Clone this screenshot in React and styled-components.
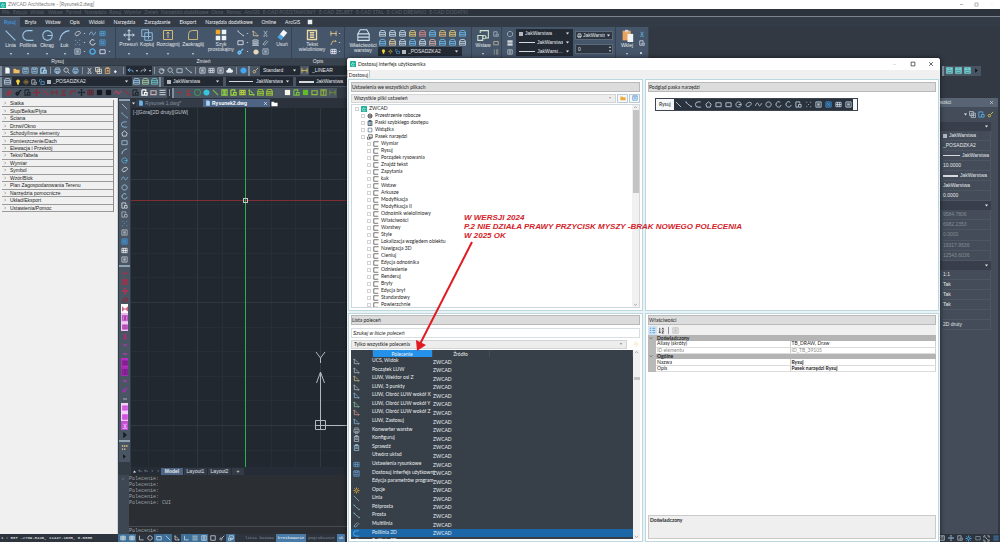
import React from "react";
import styled, { createGlobalStyle, css } from "styled-components";

const Global = createGlobalStyle`
  *, *::before, *::after { box-sizing: border-box; }
  html, body { margin: 0; background: #323942; }
  body { font: 5px/7px "Liberation Sans", Arial, sans-serif; color: #e3e7eb; overflow: hidden; }
  button, input, select { font: inherit; color: inherit; margin: 0; padding: 0; border: 0; background: none; border-radius: 0; }
  table { border-collapse: collapse; border-spacing: 0; }
`;

/* ---------- icons ---------- */
const PATHS = {
  line: "M2 2 14 14",
  ray: "M2 3 14 13M1 2h2v2M13 12h2v2",
  pline: "M13 2H7a5 5 0 0 0 0 12h7",
  circle: "M8 2a6 6 0 1 0 .1 0z",
  circleR: "M8 2a6 6 0 1 0 .1 0zM8 8h6",
  arc: "M2 14C3 7 7 3 14 2",
  rect: "M2 4h12v9H2z",
  polygon: "M8 2l6 5-2 7H4L2 7z",
  spline: "M1 11c3-9 6-7 7-3s4 5 7-3",
  ellipse: "M3 11C1 7 7 3 11 3s5 4 1 7-7 5-9 1z",
  arcs: "M12 3a6 6 0 1 0 2 6",
  block: "M2 2h9v4M2 2v12h5M8 8h6v6H8z",
  points: "M3 3h2M12 3h2M7 8h2M3 13h2M12 13h2",
  hatch: "M2 2h12v12H2zM5 5h6v6H5zM5 5l6 6",
  grid: "M2 3h12v10H2zM2 8h12M6 3v10M10 3v10",
  text: "M2 2h12v12H2zM5 5h6M5 8h6M5 11h6",
  move: "M8 1v14M1 8h14M6 3l2-2 2 2M6 13l2 2 2-2M3 6 1 8l2 2M13 6l2 2-2 2",
  copy: "M1 1h9v9H1zM5 5h10v10H5zM10 7v6M7 10h6",
  stretch: "M2 2h12v12H2zM8 12V4M6 6l2-2 2 2",
  fillet: "M2 14V7a5 5 0 0 1 5-5h7v12z",
  layers: "M3 2h10l2 3H1zM3 7h10l2 3H1zM3 12h10l2 3H1z",
  stack: "M4 1h8l3 5H1zM1 6v4h14V6M1 10v4h14v-4",
  insert: "M1 8h6v6H1zM4 5V2h10v9h-4M9 8a2 2 0 1 0 .1 0",
  dim: "M2 2v12M14 2v12M2 8h12M4 6 2 8l2 2M12 6l2 2-2 2",
  leader: "M2 14 6 5h8M12 3l2 2-2 2",
  file: "M3 1h7l3 3v11H3z",
  folder: "M1 4h5l2 2h7v8H1z",
  save: "M2 2h12v12H2zM5 2v4h6V2M4 10h8",
  print: "M4 6V2h8v4M2 6h12v6H2zM5 10h6v5H5z",
  cut: "M4 2l7 9M12 2 5 11M3 13a2 2 0 1 0 4-1M9 12a2 2 0 1 0 4 1",
  paste: "M3 3h10v12H3zM6 1h4v3H6zM6 8h5M6 11h5",
  brush: "M14 2 8 8M5 7l4 4-4 3-3-3z",
  undo: "M7 3 2 7l5 4M2 7h8q4 0 4 5",
  redo: "M9 3l5 4-5 4M14 7H6q-4 0-4 5",
  hand: "M4 8V4M7 8V2M10 8V3M13 9V5v6q-1 4-5 4-4 0-6-6",
  zoom: "M7 2a5 5 0 1 0 .1 0zM11 11l4 4",
  help: "M8 1a7 7 0 1 0 .1 0z",
  cloud: "M3 13a3 3 0 0 1 1-6 4 4 0 0 1 8-1 3 3 0 0 1 1 7z",
  bulb: "M8 1a5 5 0 0 0-3 9l1 5h4l1-5A5 5 0 0 0 8 1z",
  sun: "M8 5a3 3 0 1 0 .1 0zM8 1v2M8 13v2M1 8h2M13 8h2M3 3l1 1M12 12l1 1M13 3l-1 1M4 12l-1 1",
  lock: "M1 8V4a3 3 0 0 1 6 0M5 7h9v8H5z",
  ucs: "M3 2v11h11M1 4l2-2 2 2M12 11l2 2-2 2M6 5l5 5",
  clip: "M3 3h10v12H3zM6 1h4v3H6zM5 7h6M5 10h6",
  gear: "M8 5a3 3 0 1 0 .1 0zM8 1v4M8 11v4M1 8h4M11 8h4M3 3l2 2M11 11l2 2M13 3l-2 2M5 11l-2 2",
  multi: "M2 12 10 3M6 14l8-9M2 12l4 2",
  caret: "M3 5h10l-5 6z",
  right: "M5 3v10l6-5z",
  chevR: "M6 3l5 5-5 5",
  down: "M3 6l5 5 5-5",
  up: "M3 10l5-5 5 5",
  upF: "M3 11h10L8 5z",
  x: "M3 3l10 10M13 3 3 13",
  min: "M3 8h10",
  max: "M3 3h10v10H3z",
  ortho: "M4 2v11h11",
  full: "M2 6V2h4M10 2h4v4M14 10v4h-4M6 14H2v-4M5 5l6 6",
  menu: "M1 3h14M1 8h14M1 13h14",
  square: "M2 2h12v12H2z",
  az: "M4 2v11M2 11l2 3 2-3M9 6l2-4 2 4M9 9h4l-4 5h4",
  tree: "M2 3h3M8 3h6M2 8h3M8 8h6M2 13h3M8 13h6",
  toolbar: "M15 2H2v12h12",
  dots: "M2 3h3v3H2zM7 3h3v3H7zM12 3h3v3h-3zM2 10h3v3H2zM7 10h3v3H7z",
};
const Svg = styled.svg`
  flex: none;
  display: block;
  width: ${(p) => p.$s}px;
  height: ${(p) => p.$s}px;
  color: ${(p) => p.$c || "currentColor"};
`;
const Icon = ({ n, s = 7, c, f, w = 1.8 }) => (
  <Svg viewBox="0 0 16 16" $s={s} $c={c} aria-hidden="true">
    <path d={PATHS[n]} fill={f ? "currentColor" : "none"} stroke={f ? "none" : "currentColor"} strokeWidth={w} />
  </Svg>
);
const Logo = ({ s = 7 }) => (
  <Svg viewBox="0 0 16 16" $s={s} aria-hidden="true">
    <rect width="16" height="16" rx="1" fill="#1fae9b" />
    <path d="M3 11l4-7 2 5 4-4M4 13h8" fill="none" stroke="#d9fff7" strokeWidth="1.6" />
  </Svg>
);

/* ---------- shared ---------- */
const lato = css`
  font-family: Lato, "Liberation Sans", sans-serif;
`;
const Row = styled.div`
  display: flex;
  align-items: center;
  gap: ${(p) => p.$gap || 0}px;
`;
const Grow = styled.div`
  flex: 1;
  min-width: 0;
`;
const Slot = styled.button`
  flex: none;
  display: flex;
  align-items: center;
  justify-content: center;
  width: ${(p) => p.$w || 9}px;
  height: 9px;
  background: ${(p) => p.$bg || "none"};
`;
const Tool = ({ label, width, bg, ...icon }) => (
  <Slot aria-label={label || icon.n} $w={width} $bg={bg}>
    <Icon {...icon} />
  </Slot>
);
const ComboBox = styled.div`
  flex: none;
  display: flex;
  align-items: center;
  gap: 2px;
  width: ${(p) => p.$w}px;
  height: 9px;
  padding: 0 3px;
  background: #232a34;
  ${(p) => p.$frame && css`padding: 0 1px; gap: 1px; border: 1px solid #5c6979; background: #2e3641;`}
  select {
    appearance: none;
    flex: 1;
    min-width: 0;
    text-align-last: ${(p) => (p.$right ? "right" : "left")};
  }
`;
const Stroke = styled.i`
  flex: none;
  width: ${(p) => p.$w}px;
  height: ${(p) => p.$t || 1}px;
  background: #d6dade;
`;
const Swatch = styled.i`
  flex: none;
  width: 4px;
  height: 4px;
  background: #b4b9bf;
`;
const Combo = ({ label, value, children, ...p }) => (
  <ComboBox {...p}>
    {children}
    <select aria-label={label} defaultValue={value}>
      <option>{value}</option>
    </select>
    <Icon n="caret" s={5} f />
  </ComboBox>
);

/* ---------- frame ---------- */
const Page = styled.div`
  position: relative;
  display: flex;
  flex-direction: column;
  height: 100vh;
  overflow: hidden;
`;
const TitleBar = styled.header`
  ${lato}
  display: flex;
  align-items: center;
  gap: 2px;
  height: 9px;
  padding-right: 6px;
  background: #fff;
  color: #7b7b7b;
`;
const MenuBar = styled.nav`
  ${lato}
  display: flex;
  align-items: center;
  gap: 3px;
  height: 8px;
  padding-left: 2px;
  background: #2c333c;
  border-bottom: 1px solid #7d858e;
  color: #59616b;
`;
const Tabs = styled.nav`
  ${lato}
  display: flex;
  align-items: center;
  gap: 1px;
  height: 10px;
  background: #333b46;
`;
const Tab = styled.button`
  height: 10px;
  padding: 0 4px;
  color: ${(p) => (p.$on ? "#3fa3ee" : "#eef1f4")};
  background: ${(p) => (p.$on ? "#47576b" : "none")};
`;
const Ribbon = styled.div`
  display: flex;
  height: 38px;
`;
const Group = styled.section`
  flex: none;
  display: flex;
  flex-direction: column;
  width: ${(p) => p.$w}px;
  border-right: 1px solid #39434f;
  background: #46566a;
`;
const GroupBody = styled.div`
  flex: 1;
  display: flex;
  align-items: center;
  gap: ${(p) => p.$gap || 0}px;
  padding: 0 3px;
`;
const GroupName = styled.div`
  height: 7px;
  text-align: center;
  background: #39424f;
`;
const BigButton = styled.button`
  flex: none;
  display: flex;
  flex-direction: column;
  align-items: center;
  width: ${(p) => p.$w}px;
  height: 27px;
  line-height: 5px;
  white-space: nowrap;
`;
const BigLabel = styled.span`
  flex: 1;
  padding-top: 1px;
`;
const Big = ({ label, w, caret = true, children }) => (
  <BigButton $w={w}>
    {children}
    <BigLabel>{label}</BigLabel>
    {caret && <Icon n="caret" s={4} f />}
  </BigButton>
);
const MiniGrid = styled.div`
  flex: none;
  display: grid;
  align-items: center;
  grid-template-columns: ${(p) => p.$cols || "9px"};
`;
const MiniTools = ({ tools, carets }) => (
  <MiniGrid $cols="10px 5px 10px 10px 4px">
    {tools.map((row, r) => (
      <React.Fragment key={r}>
        <Tool {...row[0]} />
        <Icon n="caret" s={3} f />
        <Tool {...row[1]} />
        <Tool {...row[2]} />
        <span>{carets === r && <Icon n="caret" s={3} f />}</span>
      </React.Fragment>
    ))}
  </MiniGrid>
);

const MENU = ["Plik", "Edycja", "Widok", "Wstaw", "Format", "Narzędzia", "Rysuj", "Wymiar", "Zmień", "Narzędzia dodatkowe", "Okno", "Pomoc", "ArcGIS", "E-CAD PODSTAWOWY", "E-CAD ŻELBET", "E-CAD STAL", "E-CAD DREWNO", "E-CAD DODATKI"];
const RIBBON_TABS = ["Rysuj", "Bryła", "Wstaw", "Opis", "Widoki", "Narzędzia", "Zarządzanie", "Eksport", "Narzędzia dodatkowe", "Online", "ArcGIS"];
const LB = "#9cc9e6";
const DRAW_TOOLS = [
  [{ n: "ellipse", c: "#d5dde6" }, { n: "spline", c: LB }, { n: "grid", c: "#4f9fd8" }],
  [{ n: "points", c: LB }, { n: "arcs", c: "#fff" }, { n: "hatch", c: "#4f9fd8" }],
  [{ n: "text", c: "#c6d2de" }, { n: "circle", c: "#4fb2f0", w: 3 }, { n: "rect", c: "#eef" }],
];
const EDIT_TOOLS = [
  [{ n: "ray", c: "#d5dde6" }, { n: "ucs", c: "#e4c9a0" }, { n: "cut", c: "#b9c6d2" }],
  [{ n: "rect", c: "#eef" }, { n: "layers", c: "#c8d2dc" }, { n: "multi", c: "#b9c6d2" }],
  [{ n: "brush", c: "#6fc2f5", w: 3 }, { n: "help", c: "#e7d9c0", f: true, s: 6 }, { n: "text", c: "#b9c6d2" }],
];

const ArrayIcon = () => (
  <Svg viewBox="0 0 16 16" $s={12} aria-hidden="true">
    <path d="M1 1h6v6H1z" fill="#f5a623" />
    <path d="M9 1h6v6H9zM1 9h6v6H1zM9 9h6v6H9z" fill="#eef3f8" />
  </Svg>
);
const EraserIcon = () => (
  <Svg viewBox="0 0 16 16" $s={12} aria-hidden="true">
    <path d="M10 1l5 4-5 6-5-4z" fill="#f4f7fa" />
    <path d="M5 7l5 4-3 4-5-4z" fill="#4aa8e8" />
  </Svg>
);
const PasteIcon = () => (
  <Svg viewBox="0 0 16 16" $s={13} aria-hidden="true">
    <path d="M2 2h10v12H2z" fill="#e9a35c" />
    <path d="M5 1h4v3H5z" fill="#cfd6dd" />
    <path d="M8 6h7v10H8z" fill="#f2f5f8" />
  </Svg>
);
const StackBox = styled.div`
  display: flex;
  flex-direction: column;
  gap: 4px;
`;
const Spinner = styled.div`
  display: flex;
  align-items: center;
  width: 38px;
  height: 10px;
  padding-left: 2px;
  border: 1px solid #5c6979;
  background: #2e3641;
  input { flex: 1; min-width: 0; }
`;

const RibbonBar = () => (
  <Ribbon>
    <Group $w={116}>
      <GroupBody>
        <Big label="Linia" w={15}><Icon n="line" s={13} c={LB} w={1.3} /></Big>
        <Big label="Polilinia" w={20}><Icon n="pline" s={13} c={LB} w={1.3} /></Big>
        <Big label="Okrąg" w={18}><Icon n="circleR" s={13} c={LB} w={1.3} /></Big>
        <Big label="Łuk" w={17}><Icon n="arc" s={13} c={LB} w={1.3} /></Big>
        <MiniTools tools={DRAW_TOOLS} carets={2} />
      </GroupBody>
      <GroupName>Rysuj</GroupName>
    </Group>
    <Group $w={176}>
      <GroupBody>
        <Big label="Przesuń" w={19}><Icon n="move" s={12} c="#cfe2f2" w={1.3} /></Big>
        <Big label="Kopiuj" w={18}><Icon n="copy" s={12} c="#8fbbe0" w={1.3} /></Big>
        <Big label="Rozciągnij" w={24}><Icon n="stretch" s={12} c="#d6bc7a" w={1.3} /></Big>
        <Big label="Zaokrąglij" w={26}><Icon n="fillet" s={12} c="#c9b679" w={1.3} /></Big>
        <Big label={<>Szyk<br />prostokątny</>} w={30} caret={false}><ArrayIcon /></Big>
        <MiniTools tools={EDIT_TOOLS} />
        <Big label="Usuń" w={14} caret={false}><EraserIcon /></Big>
      </GroupBody>
      <GroupName>Zmień</GroupName>
    </Group>
    <Group $w={53}>
      <GroupBody>
        <Big label={<>Tekst<br />wieloliniowy</>} w={34} caret={false}><Icon n="text" s={12} c="#ecd9a6" /></Big>
        <MiniGrid $cols="9px 4px">
          <Tool n="dim" c="#e6c98a" /><Icon n="caret" s={3} f />
          <Tool n="leader" c="#e6c98a" /><Icon n="caret" s={3} f />
          <Tool n="grid" c="#eef" /><Icon n="caret" s={3} f />
        </MiniGrid>
      </GroupBody>
      <GroupName>Opis</GroupName>
    </Group>
    <Group $w={127}>
      <GroupBody>
        <Big label={<>Właściwości<br />warstwy</>} w={30} caret={false}><Icon n="stack" s={13} c="#cfe0ee" w={1.3} /></Big>
        <div>
          <MiniGrid $cols="repeat(9, 10px)">
            {["#cfe0ee", "#cfe0ee", "#cfe0ee", "#f0d070", "#e58a8a", "#6fc2f5", "#f0c070", "#f0d070", "#6fc2f5", "#6fc2f5", "#f0d8a8", "#cfe0ee", "#6fc2f5", "#cfe0ee", "#e5b5a8", "#6fc2f5", "#6fc2f5", "#cfe0ee"].map((c, i) => (
              <Tool key={i} n="stack" label={`Warstwa ${i + 1}`} c={c} s={7} />
            ))}
          </MiniGrid>
          <Combo label="Warstwa bieżąca" value="_POSADZKA2" $w={84}>
            <Icon n="bulb" s={5} c="#f5d33c" f /><Icon n="sun" s={5} c="#f5c33c" /><Icon n="lock" s={5} c="#5db8f5" /><Swatch />
          </Combo>
        </div>
      </GroupBody>
      <GroupName />
    </Group>
    <Group $w={30}>
      <GroupBody>
        <Big label="Wstaw" w={16}><Icon n="insert" s={13} c="#cfe0c8" w={1.3} /></Big>
        <MiniGrid><Tool n="block" c="#b9c6d2" s={6} /><Tool n="rect" c="#d8c8a8" s={6} /><Tool n="tree" c="#d8d2a8" s={6} /></MiniGrid>
      </GroupBody>
      <GroupName />
    </Group>
    <Group $w={114}>
      <GroupBody $gap={2}>
        <MiniGrid><Tool n="help" c="#b9c6d2" s={6} /><Tool n="menu" c="#fff" s={6} w={3} /><Tool n="text" c="#c9d2da" s={6} /></MiniGrid>
        <div>
          <Combo label="Kolor" value="JakWarstwa" $w={57}><Swatch /></Combo>
          <Combo label="Szerokość linii" value="JakWarstwa" $w={57} $right><Stroke $w={16} /></Combo>
          <Combo label="Rodzaj linii" value="JakWarst…" $w={57} $right><Stroke $w={16} /></Combo>
        </div>
        <StackBox>
          <Combo label="Styl wydruku" value="JakWarsts" $w={38} $frame><Icon n="print" s={5} /></Combo>
          <Spinner><input aria-label="Przezroczystość" defaultValue="0" /><span><Icon n="upF" s={4} f /><Icon n="caret" s={4} f /></span></Spinner>
        </StackBox>
      </GroupBody>
      <GroupName />
    </Group>
    <Group $w={33}>
      <GroupBody $gap={2}>
        <Big label="Wklej" w={16}><PasteIcon /></Big>
        <MiniGrid><Tool n="cut" c="#6fc2f5" s={6} /><Tool n="block" c="#eef" s={6} /><Tool n="brush" c="#eef" s={6} f /></MiniGrid>
      </GroupBody>
      <GroupName />
    </Group>
  </Ribbon>
);

/* ---------- toolbars ---------- */
const ToolRow = styled.div`
  display: flex;
  align-items: center;
  height: 11px;
`;
const Bar = styled.div`
  flex: none;
  display: flex;
  align-items: center;
  gap: ${(p) => p.$gap || 0}px;
  height: 10px;
  padding-left: ${(p) => (p.$pad ? 3 : 1)}px;
  border-left: 2px solid #7f8fa0;
  background: #4a5564;
`;
const EndBar = styled(Bar)`
  margin-right: 19px;
`;
const Sep = styled.i`
  flex: none;
  width: 1px;
  height: 7px;
  margin: 0 2px;
  background: #8591a0;
`;
const Dark = styled.div`
  display: flex;
  align-items: center;
  height: 9px;
  background: #232a34;
`;
const RED_BAR = ["#b02c35", "#14181d", "#20262e", "#8b2a35", "#a83240", "#7b3038", "#7a2f3c", "#8b2a35", "#1e242c", "#5e2b34", "#15191f", "#15191f", "#b0475a", "#8c2f3a", "#20262e", "#ffffff", "#c9adb2", "#b8bfc7"];
const RED_SHAPES = ["multi", "brush", "block", "move", "line", "dim", "cut", "leader", "move", "grid", "square", "square", "spline", "ray", "block", "block", "rect", "menu"];
const GREEN_SHAPES = ["min", "cut", "help", "help", "line", "text", "block", "grid", "ucs", "stack", "stack", "menu", "square", "block", "square", "rect", "stretch", "dim"];
const GREEN_BAR = ["#a02c35", "#9b3b3b", "#3f8f52", "#38c5dc", "#7cc142", "#8fd044", "#9bd83c", "#b1c93e", "#8dc63f", "#86b63a", "#92b53a", "#4b5c66", "#f3f6e8", "#7bbf45", "#5fbe2a", "#8cbf3c", "#8fae3c", "#69803a"];

const ToolBars = () => (
  <>
    <ToolRow>
      <Bar>
        <Tool n="file" c="#f2f5f8" f /><Tool n="folder" c="#f0bd62" f /><Tool n="save" c="#9ed0f0" /><Tool n="save" c="#9ed0f0" /><Tool n="block" c="#9ed0f0" w={3} />
        <Sep /><Tool n="print" c="#a9cdea" /><Tool n="zoom" c="#d3dbe3" /><Tool n="print" c="#8fc0ea" />
        <Sep /><Tool n="cut" c="#e3e8ed" /><Tool n="copy" c="#e6e0cf" /><Tool n="paste" c="#eab067" /><Tool n="brush" c="#eef" f />
        <Sep />
        <Dark><Tool n="undo" c="#7fbdf0" /><Icon n="caret" s={4} f /><Tool n="redo" c="#a9b3be" /><Icon n="caret" s={4} f /></Dark>
        <Sep /><Tool n="hand" c="#d6dde4" /><Tool n="zoom" c="#c3ccd5" /><Tool n="rect" c="#c3ccd5" /><Tool n="ray" c="#c3ccd5" />
        <Sep /><Tool n="text" c="#d6dde4" /><Tool n="grid" c="#d6dde4" /><Tool n="text" c="#d6dde4" /><Tool n="cloud" c="#e9eef3" f />
        <Sep /><Tool n="help" c="#43a6f0" f />
      </Bar>
      <Bar>
        <Tool n="brush" c="#e6c98a" />
        <Combo label="Styl tekstu" value="Standard" $w={40} />
        <Tool n="dim" c="#d9c25a" />
        <Combo label="Styl wymiarowania" value="_LINEAR" $w={60} />
      </Bar>
      <Grow />
      <EndBar>
        <Tool n="save" c="#6fd0d0" w={3} /><Tool n="save" c="#6fd0d0" w={3} /><Tool n="save" c="#6fd0d0" w={3} /><Tool n="right" c="#10151b" f />
      </EndBar>
    </ToolRow>
    <ToolRow>
      <Bar>
        <Tool n="stack" c="#bfd3e4" />
        <Combo label="Warstwa" value="_POSADZKA2" $w={120}>
          <Icon n="bulb" s={6} c="#f5d33c" f /><Icon n="sun" s={6} c="#f5c33c" /><Icon n="block" s={6} c="#d6dde4" /><Icon n="lock" s={6} c="#5db8f5" /><Swatch />
        </Combo>
        <Tool n="stack" c="#9ed0f0" /><Tool n="stack" c="#a8d8a8" /><Tool n="stack" c="#6fd0d0" />
      </Bar>
      <Bar $pad $gap={3}>
        <Combo label="Kolor obiektu" value="JakWarstwa" $w={59}><Swatch /></Combo>
        <Combo label="Rodzaj linii obiektu" value="JakWarstwa" $w={67} $right><Stroke $w={24} /></Combo>
        <Combo label="Grubość linii obiektu" value="JakWarstwa" $w={60}><Stroke $w={15} $t={2} /></Combo>
      </Bar>
    </ToolRow>
    <ToolRow>
      <Bar $pad>{RED_BAR.map((c, i) => <Tool key={i} n={RED_SHAPES[i]} c={c} w={2.6} f={i === 10 || i === 11} label={`Kreskuj ${i + 1}`} />)}</Bar>
      <Sep />
      <Bar>{GREEN_BAR.map((c, i) => <Tool key={i} n={GREEN_SHAPES[i]} c={c} w={2.6} f={i === 3 || i === 12 || i === 14} label={`Teren ${i + 1}`} />)}</Bar>
    </ToolRow>
  </>
);

/* ---------- left palette ---------- */
const Middle = styled.div`
  flex: 1;
  min-height: 0;
  display: flex;
`;
const Palette = styled.aside`
  flex: none;
  width: 118px;
  padding: 2px 3px 0 2px;
  background: #f0f0f0;
  border-right: 1px solid #cfd4d9;
  color: #1c1c1c;
`;
const PaletteList = styled.div`
  display: grid;
  grid-auto-rows: 1fr;
  height: 112px;
`;
const PaletteItem = styled.button`
  display: flex;
  align-items: center;
  gap: 3px;
  padding-left: 1px;
  line-height: 6px;
  border-right: 1px solid #8b8b8b;
  border-bottom: 1px solid #9a9a9a;
`;
const PALETTE = ["Siatka", "Słup/Belka/Płyta", "Ściana", "Drzwi/Okno", "Schody/Inne elementy", "Pomieszczenie/Dach", "Elewacja i Przekrój", "Tekst/Tabela", "Wymiar", "Symbol", "Wzór/Blok", "Plan Zagospodarowania Terenu", "Narzędzia pomocnicze", "Układ/Eksport", "Ustawienia/Pomoc"];

/* ---------- centre ---------- */
const Centre = styled.main`
  flex: 1;
  min-width: 0;
  display: flex;
  flex-direction: column;
`;
const Work = styled.div`
  flex: 1;
  min-height: 0;
  display: flex;
`;
const SideBar = styled.div`
  flex: none;
  width: 13px;
  padding: 1px 0 0 1px;
  background: #333b45;
`;
const SideTools = styled.div`
  display: flex;
  flex-direction: column;
  align-items: center;
  width: 11px;
  border-top: 2px solid #8fa3b5;
  padding: 1px 0;
  background: #4a5564;
`;
const View = styled.div`
  flex: 1;
  min-width: 0;
  display: flex;
  flex-direction: column;
`;
const DocTabs = styled.div`
  display: flex;
  align-items: center;
  height: 10px;
  background: #2b323c;
`;
const DocTab = styled.button`
  display: flex;
  align-items: center;
  gap: 1px;
  width: 67px;
  height: 8px;
  padding: 0 2px;
  text-align: left;
  color: ${(p) => (p.$on ? "#fff" : "#8992a0")};
  font-weight: ${(p) => (p.$on ? 700 : 400)};
  background: ${(p) => (p.$on ? "#4d6484" : "#343c48")};
  span { flex: 1; }
`;
const Canvas = styled.div`
  position: relative;
  flex: 1;
  min-height: 0;
  background: #212830;
  > svg { display: block; width: 100%; height: 100%; }
`;
const ViewLabel = styled.div`
  position: absolute;
  left: 2px;
  top: 1px;
  color: #c9ced4;
`;
const LayoutTabs = styled.div`
  display: flex;
  align-items: center;
  height: 8px;
  background: #262c35;
`;
const LayoutTab = styled.button`
  width: ${(p) => p.$w}px;
  height: 7px;
  background: ${(p) => (p.$on ? "#4d6484" : "#333b46")};
  font-weight: ${(p) => (p.$on ? 700 : 400)};
  border-right: 1px solid #262c35;
`;
const Command = styled.div`
  display: flex;
  height: 59px;
  background: #2b2e32;
  color: #9ea4aa;
  font: 5px/6px "Liberation Mono", monospace;
`;
const CommandGrip = styled.div`
  width: 11px;
  padding: 2px 3px;
  background: #3d4653;
`;
const CommandText = styled.div`
  flex: 1;
  display: flex;
  flex-direction: column;
  padding-top: 1px;
  pre { flex: 1; margin: 0; font: inherit; }
`;
const CommandLine = styled.label`
  display: flex;
  height: 8px;
  padding-top: 1px;
  border-top: 1px solid #474c52;
  input { flex: 1; height: 6px; }
`;

const SIDE_A = [["line", "#a5c5de"], ["ray", "#7fb0d0"], ["pline", "#8fc5ea"], ["polygon", "#dce3ea"], ["rect", "#a5c5de"], ["arc", "#a5d5ea"], ["circleR", "#5db8e8"], ["ellipse", "#e6e9ec"], ["spline", "#7fc0e8"], ["circle", "#9fd5f0"], ["arcs", "#9fd5f0"], ["block", "#e1e5e9"], ["block", "#b5bcc4"], ["points", "#4fa5f0"], ["text", "#b9c0c8"], ["hatch", "#3f9be8"], ["grid", "#eef1f4"], ["text", "#c5ccd3"]];
const SIDE_B = [["down", "#b02c45"], ["stretch", "#b02c45"], ["move", "#c03050"], ["ellipse", "#8b2a3a"], ["dim", "#c04060", "#fff"], ["text", "#b040b0", "#e8b8ec"], ["grid", "#b040b0", "#f0c8f4"], ["cut", "#b02c75"], ["min", "#c030c0"], ["min", "#d030d0"], ["grid", "#7a2088", "#b52bc4"], ["text", "#7a2088", "#a52bb4"], ["min", "#d030d0"], ["brush", "#a030b0"], ["min", "#aab"], ["grid", "#d050e0", "#f4d0f8"], ["hatch", "#d050e0", "#f4d0f8"], ["cut", "#f0a0f8", "#c050d0"], ["right", "#10151b"]];

const gridX = [66, 189];
const gridY = [71, 194, 317];
const Drawing = () => (
  <svg aria-label="Obszar rysunku">
    <g stroke="#262f38">
      {[17, 42, 91, 140, 164, 213].map((x) => <line key={x} x1={x + 0.5} x2={x + 0.5} y1="0" y2="100%" />)}
      {[22, 46, 96, 120, 145, 169, 219, 243, 268, 292, 342].map((y) => <line key={y} y1={y + 0.5} y2={y + 0.5} x1="0" x2="100%" />)}
    </g>
    <g stroke="#2f3841">
      {gridX.map((x) => <line key={x} x1={x + 0.5} x2={x + 0.5} y1="0" y2="100%" />)}
      {gridY.map((y) => <line key={y} y1={y + 0.5} y2={y + 0.5} x1="0" x2="100%" />)}
    </g>
    <line x1="0" x2="100%" y1="92.5" y2="92.5" stroke="#7f2f33" />
    <line x1="114.5" x2="114.5" y1="0" y2="100%" stroke="#2bb04a" />
    <rect x="112.5" y="90.5" width="4" height="4" fill="none" stroke="#c3c8cc" />
    <g stroke="#b4b9be" fill="none">
      <path d="M189.5 322V265M185.5 275l4-11 4 11M184.5 312.5h10v9h-10zM184.5 317.5H240" />
      <path d="M185 244l4.5 6 4.5-6M189.5 250v5" />
    </g>
  </svg>
);

/* ---------- right palette ---------- */
const Props = styled.aside`
  flex: none;
  width: 88px;
  border-right: 2px solid #323942;
  background: #434c58;
`;
const PropsTitle = styled.div`
  display: flex;
  align-items: center;
  justify-content: space-between;
  height: 9px;
  padding: 0 4px 0 12px;
  background: #586473;
`;
const PropsTools = styled(Row)`
  justify-content: flex-end;
  height: 15px;
  padding-right: 3px;
`;
const PropsHead = styled.div`
  display: flex;
  align-items: center;
  justify-content: flex-end;
  height: 9px;
  margin-right: 7px;
  padding-right: 2px;
  background: #383f4a;
`;
const PropsGroup = styled.div`
  display: grid;
  grid-auto-rows: 1fr;
  height: ${(p) => p.$h}px;
  margin-right: 7px;
  padding-left: 31px;
  color: ${(p) => (p.$dim ? "#848c96" : "#e3e7eb")};
  border-right: 1px solid #4d5764;
`;
const PropsRow = styled.div`
  display: flex;
  align-items: center;
  gap: 2px;
  border-bottom: 1px solid #4d5764;
`;

/* ---------- status bar ---------- */
const Status = styled.footer`
  display: flex;
  align-items: center;
  height: 8px;
  overflow: hidden;
  background: #2d343e;
  font: 4px/6px "Liberation Mono", monospace;
`;
const Coords = styled.div`
  width: 118px;
  padding-left: 1px;
  color: #fff;
`;
const Toggle = styled.button`
  height: 8px;
  padding: 0 2px;
  color: ${(p) => (p.$on ? "#fff" : "#828a94")};
  background: ${(p) => (p.$on ? "#4a7ba8" : "none")};
`;
const StatusGap = styled.div`
  width: 8px;
`;

/* ---------- dialog ---------- */
const Dialog = styled.section`
  ${lato}
  position: absolute;
  left: 347px;
  right: 60px;
  top: 58px;
  bottom: 0;
  display: flex;
  flex-direction: column;
  border-radius: 3px 3px 0 0;
  background: #e9f3f5;
  box-shadow: 0 0 5px rgba(0, 0, 0, 0.6);
  color: #1d1d1d;
  overflow: hidden;
`;
const DialogTitle = styled.div`
  display: flex;
  align-items: center;
  gap: 2px;
  height: 12px;
  padding: 0 5px 0 3px;
  background: #fff;
`;
const Controls = styled(Row)`
  margin-left: auto;
`;
const TabStrip = styled.div`
  height: 8px;
  background: #f0f0f0;
`;
const DialogTab = styled.button`
  width: 23px;
  height: 8px;
  background: #fff;
  border: 1px solid #c9c9c9;
  border-bottom: 0;
  line-height: 6px;
`;
const Columns = styled.div`
  flex: 1;
  min-height: 0;
  display: grid;
  grid-template-columns: 295px minmax(0, 1fr);
  gap: 2px;
  padding: 1px 1px 0;
`;
const Column = styled.div`
  display: flex;
  flex-direction: column;
  gap: 2px;
  min-width: 0;
  min-height: 0;
`;
const Panel = styled.div`
  display: flex;
  flex-direction: column;
  min-height: 0;
  padding: 2px;
  border: 1px solid #bcd8de;
  background: #fff;
  ${(p) => (p.$h ? css`flex: none; height: ${p.$h}px;` : css`flex: 1; padding-top: 1px;`)}
`;
const PanelHead = styled.h2`
  flex: none;
  height: 10px;
  margin: 0;
  font: inherit;
  line-height: 8px;
  background: #dcdcdc;
  border: 1px solid #b9b9b9;
`;
const PickRow = styled(Row)`
  flex: none;
  height: 12px;
`;
const Pick = styled.div`
  flex: 1;
  display: flex;
  align-items: center;
  height: 9px;
  padding: 0 3px 0 2px;
  background: #ededed;
  border: 1px solid #d4d4d4;
  color: #222;
  select { appearance: none; flex: 1; }
`;
const FrameButton = styled(Slot)`
  width: 11px;
  border: 1px solid #b9c9d6;
  background: #f6f8fa;
`;
const TreeBox = styled.div`
  flex: 1;
  min-height: 0;
  display: flex;
  border: 1px solid #cfd8dc;
  overflow: hidden;
`;
const Tree = styled.ul`
  flex: 1;
  margin: 0;
  padding: 0 0 0 3px;
  list-style: none;
`;
const Leaf = styled.li`
  display: flex;
  align-items: center;
  gap: 2px;
  height: 7px;
  padding-left: ${(p) => p.$level * 6}px;
`;
const Expander = styled.i`
  width: 4px;
  height: 4px;
  border: 1px solid #d3d3d3;
`;
const Scroll = styled.div`
  flex: none;
  display: flex;
  flex-direction: column;
  align-items: center;
  justify-content: space-between;
  width: 7px;
  background: #f1f1f1;
  color: #777;
`;
const Thumb = styled.i`
  width: 6px;
  height: ${(p) => p.$h}px;
  margin-bottom: auto;
  margin-top: ${(p) => p.$top || 0}px;
  background: #c4c4c4;
`;
const Search = styled.input`
  flex: none;
  height: 10px;
  margin-top: 3px;
  padding-left: 1px;
  border: 1px solid #d9dee2;
  background: #fff;
  &::placeholder { color: #222; opacity: 1; font-style: italic; font-family: "Liberation Sans", Arial, sans-serif; }
`;
const ListBox = styled.div`
  flex: 1;
  min-height: 0;
  display: flex;
  overflow: hidden;
`;
const ListArea = styled.div`
  flex: 1;
  min-width: 0;
  overflow: hidden;
  background: #373f48;
  color: #eceff2;
`;
const Commands = styled.table`
  table-layout: fixed;
  width: 100%;
  height: 196px;
  line-height: 6px;
  td, th { padding: 0; white-space: nowrap; font-weight: 400; }
  th { height: 7px; border-right: 1px solid #434c57; }
  td { height: 8px; vertical-align: top; }
  td:nth-child(3) { vertical-align: bottom; padding: 0 0 1px 1px; }
  td:first-child { padding: 1px 0 0 2px; }
`;
const SortHead = styled.th`
  background: #2492ea;
`;
const CommandRow = styled.tr`
  background: ${(p) => (p.$on ? "#1c67a8" : "none")};
`;
const Preview = styled.div`
  align-self: flex-start;
  display: flex;
  align-items: center;
  height: 13px;
  margin: 6px 0 0 7px;
  padding-left: 3px;
  border: 1px solid #3c4450;
  background: #f5f7f9;
`;
const PreviewTools = styled(Row)`
  height: 11px;
  margin: 0 4px 0 3px;
  background: #2a323d;
`;
const GridTools = styled(Row)`
  flex: none;
  height: 10px;
  background: #f0f0f0;
`;
const PropTable = styled.table`
  table-layout: fixed;
  width: 100%;
  height: 37px;
  line-height: 5px;
  background: #fff;
  td, th { height: 6px; padding: 0 0 0 1px; text-align: left; font-weight: 400; border-bottom: 1px solid #dcdcdc; border-right: 1px solid #d0d0d0; }
  td:first-child { background: #b9b9b9; border: 0; }
`;
const Category = styled.tr`
  background: #b4b4b4;
  & > th { font-weight: 700; border: 0; }
`;
const Muted = styled.tr`
  color: #8a8a8a;
`;
const Description = styled.div`
  flex: none;
  height: 24px;
  padding: 1px;
  border: 1px solid #c9c9c9;
  background: #efefef;
  font-weight: 700;
`;
const Blank = styled.div`
  flex: 1;
`;
const Note = styled.p`
  position: absolute;
  left: 464px;
  top: 213px;
  margin: 0;
  color: #d2232a;
  font: italic 700 8px/9px "Liberation Sans", Arial, sans-serif;
  white-space: nowrap;
`;
const Arrow = styled.svg`
  position: absolute;
  left: 410px;
  top: 240px;
  width: 70px;
  height: 114px;
`;

const LEAVES = ["Wymiar", "Rysuj", "Porządek rysowania", "Znajdź tekst", "Zapytania", "Łuk", "Wstaw", "Arkusze", "Modyfikacja", "Modyfikacja II", "Odnośnik wieloliniowy", "Właściwości", "Warstwy", "Style", "Lokalizacja względem obiektu", "Nawigacja 3D", "Cieniuj", "Edycja odnośnika", "Odniesienie", "Renderuj", "Bryły", "Edycja brył", "Standardowy", "Powierzchnie"];
const COMMANDS = [
  ["ucs", "UCS, Widok", "#b5c3cf"], ["ucs", "Początek LUW", "#b5c3cf"], ["ucs", "LUW, Wektor osi Z", "#d9c58a"], ["ucs", "LUW, 3 punkty", "#b5c3cf"],
  ["ucs", "LUW, Obróć LUW wokół X", "#8fc0e8"], ["ucs", "LUW, Obróć LUW wokół Y", "#8fd0a0"], ["ucs", "LUW, Obróć LUW wokół Z", "#e0a090"], ["ucs", "LUW, Zastosuj", "#8fc0e8"],
  ["print", "Konwerter warstw", "#a9b5bf"], ["clip", "Konfiguruj", "#b9cbd9"], ["clip", "Sprawdź", "#9fd0e8"], [null, "Utwórz układ"],
  ["grid", "Ustawienia rysunkowe", "#5fa0d0"], ["save", "Dostosuj interfejs użytkowni", "#6fb2f0"], [null, "Edycja parametrów program"], ["gear", "Opcje", "#f0b93c"],
  ["line", "Linia", "#8fc0e0"], ["ray", "Półprosta", "#8fc0e0"], ["ray", "Prosta", "#8fc0e0"], ["multi", "Multilinia", "#8fc0e0"],
  ["pline", "Polilinia 2D", "#5fc0ff"], ["pline", "Polilinia 3D", "#8fc0e0"],
];
const PREVIEW = ["line", "ray", "pline", "polygon", "rect", "rect", "circleR", "ellipse", "spline", "circle", "arcs", "arcs", "block", "points", "text", "hatch", "grid", "text"];

const CustomizeDialog = () => (
  <Dialog role="dialog" aria-label="Dostosuj interfejs użytkownika">
    <DialogTitle>
      <Logo s={6} />Dostosuj interfejs użytkownika
      <Controls $gap={9}>
        <Slot aria-label="Minimalizuj"><Icon n="min" s={5} c="#c9c9c9" /></Slot>
        <Slot aria-label="Maksymalizuj"><Icon n="max" s={6} /></Slot>
        <Slot aria-label="Zamknij"><Icon n="x" s={6} /></Slot>
      </Controls>
    </DialogTitle>
    <TabStrip><DialogTab>Dostosuj</DialogTab></TabStrip>
    <Columns>
      <Column>
        <Panel $h={232}>
          <PanelHead>Ustawienia we wszystkich plikach</PanelHead>
          <PickRow $gap={1}>
            <Pick>
              <select aria-label="Pliki ustawień"><option>Wszystkie pliki ustawień</option></select>
              <Icon n="caret" s={4} c="#999" f />
            </Pick>
            <FrameButton aria-label="Otwórz"><Icon n="folder" s={6} c="#eda93c" f /></FrameButton>
            <FrameButton aria-label="Zapisz"><Icon n="save" s={6} c="#4d8fd0" /></FrameButton>
          </PickRow>
          <TreeBox>
            <Tree>
              <Leaf $level={0}><Expander /><Logo s={6} />ZWCAD</Leaf>
              <Leaf $level={1}><Expander /><Icon n="gear" s={6} w={2.4} />Przestrzenie robocze</Leaf>
              <Leaf $level={1}><Expander /><Icon n="paste" s={6} c="#2f4a60" w={2.4} />Paski szybkiego dostępu</Leaf>
              <Leaf $level={1}><Expander /><Icon n="max" s={6} c="#4a6a8a" />Wstążka</Leaf>
              <Leaf $level={1}><Expander /><Icon n="insert" s={6} c="#333" />Pasek narzędzi</Leaf>
              {LEAVES.map((t) => (
                <Leaf key={t} $level={2}><Expander /><Icon n="toolbar" s={6} c="#333" />{t}</Leaf>
              ))}
            </Tree>
            <Scroll><Icon n="up" s={5} /><Thumb $h={83} /><Icon n="down" s={5} /></Scroll>
          </TreeBox>
        </Panel>
        <Panel>
          <PanelHead>Lista poleceń</PanelHead>
          <Search aria-label="Szukaj" placeholder="Szukaj w liście poleceń" />
          <PickRow $gap={5}>
            <Pick>
              <select aria-label="Kategoria poleceń"><option>Tylko wszystkie polecenia</option></select>
              <Icon n="caret" s={4} c="#777" f />
            </Pick>
            <Tool n="sun" label="Nowe polecenie" c="#f0dc9a" s={6} width={8} />
          </PickRow>
          <ListBox>
            <ListArea>
              <Commands>
                <colgroup><col width="21" /><col width="60" /><col width="57" /><col /></colgroup>
                <thead><tr><th /><SortHead>Polecenie</SortHead><th>Źródło</th><th /></tr></thead>
                <tbody>
                  {COMMANDS.map(([n, t, c]) => (
                    <CommandRow key={t} $on={t === "Polilinia 2D"}>
                      <td>{n && <Icon n={n} c={c} s={7} w={1.6} />}</td><td>{t}</td><td>ZWCAD</td><td />
                    </CommandRow>
                  ))}
                </tbody>
              </Commands>
            </ListArea>
            <Scroll><Icon n="up" s={5} /><Thumb $h={3} $top={22} /><Icon n="down" s={5} /></Scroll>
          </ListBox>
        </Panel>
      </Column>
      <Column>
        <Panel $h={232}>
          <PanelHead>Podgląd paska narzędzi</PanelHead>
          <Preview>Rysuj
            <PreviewTools $gap={1}>
              {PREVIEW.map((n, i) => <Tool key={i} n={n} label={`${n} ${i}`} c={n === "hatch" ? "#3f9be8" : "#c9dbea"} s={7} />)}
            </PreviewTools>
          </Preview>
        </Panel>
        <Panel>
          <PanelHead>Właściwości</PanelHead>
          <GridTools>
            <Tool n="tree" label="Kategorie" c="#4d8fd0" bg="#cfe4f7" /><Tool n="az" label="Alfabetycznie" c="#333" /><Sep /><Tool n="text" label="Strony" c="#b5b5b5" />
          </GridTools>
          <PropTable>
            <colgroup><col width="8" /><col width="134" /><col /></colgroup>
            <tbody>
              <Category><td><Icon n="down" s={4} /></td><th colSpan={2}>Doświadczony</th></Category>
              <tr><td /><th>Aliasy (skróty)</th><td>TB_DRAW, Draw</td></tr>
              <Muted><td /><th>ID elementu</th><td>ID_TB_39105</td></Muted>
              <Category><td><Icon n="down" s={4} /></td><th colSpan={2}>Ogólne</th></Category>
              <tr><td /><th>Nazwa</th><td><b>Rysuj</b></td></tr>
              <tr><td /><th>Opis</th><td><b>Pasek narzędzi Rysuj</b></td></tr>
            </tbody>
          </PropTable>
          <Blank />
          <Description>Doświadczony</Description>
        </Panel>
      </Column>
    </Columns>
  </Dialog>
);

export default function App() {
  return (
    <Page>
      <Global />
      <TitleBar>
        <Logo s={6} />
        <Grow>ZWCAD Architecture - [Rysunek2.dwg]</Grow>
        <Row $gap={8}><Icon n="min" s={5} /><Slot aria-label="Przywróć"><Icon n="max" s={5} /></Slot><Icon n="x" s={5} c="#f0f0f0" /></Row>
      </TitleBar>
      <MenuBar>{MENU.map((m) => <span key={m}>{m}</span>)}</MenuBar>
      <Tabs>
        {RIBBON_TABS.map((t, i) => <Tab key={t} $on={i === 0}>{t}</Tab>)}
        <Tool n="square" label="Zwiń" c="#eef1f4" s={6} f />
      </Tabs>
      <RibbonBar />
      <ToolBars />
      <Middle>
        <Palette>
          <PaletteList>
            {PALETTE.map((t) => <PaletteItem key={t}><Icon n="chevR" s={4} c="#555" />{t}</PaletteItem>)}
          </PaletteList>
        </Palette>
        <Centre>
          <Work>
            <SideBar>
              <SideTools>{SIDE_A.map(([n, c], i) => <Tool key={i} n={n} c={c} label={`Rysuj ${i + 1}`} />)}</SideTools>
              <SideTools>{SIDE_B.map(([n, c, bg], i) => <Tool key={i} n={n} c={c} bg={bg} s={6} width={7} w={3} label={`Opis ${i + 1}`} />)}</SideTools>
              <SideTools><Tool n="dots" c="#f0c890" f /><Tool n="right" c="#10151b" f /></SideTools>
            </SideBar>
            <View>
              <DocTabs>
                <Icon n="caret" s={5} f />
                <DocTab><Icon n="file" s={6} c="#6fb2e8" f /><span>Rysunek 1.dwg*</span></DocTab>
                <DocTab $on><Icon n="file" s={6} c="#a9d2f5" f /><span>Rysunek2.dwg</span><Icon n="x" s={5} /></DocTab>
                <Tool n="folder" label="Nowy rysunek" c="#fff" s={7} f />
              </DocTabs>
              <Canvas>
                <Drawing />
                <ViewLabel>[-][Góra][2D druty][GUW]</ViewLabel>
              </Canvas>
              <LayoutTabs>
                <Tool n="upF" label="Lista układów" s={5} f width={6} />
                {["Pierwszy", "Poprzedni", "Następny", "Ostatni"].map((l, i) => <Tool key={l} label={l} n={i < 2 ? "undo" : "chevR"} s={4} c="#9aa3ad" width={6} />)}
                <LayoutTab $on $w={23}>Model</LayoutTab>
                <LayoutTab $w={24}>Layout1</LayoutTab>
                <LayoutTab $w={24}>Layout2</LayoutTab>
                <LayoutTab $w={13}>+</LayoutTab>
              </LayoutTabs>
            </View>
          </Work>
          <Command>
            <CommandGrip><Icon n="x" s={4} c="#6d7683" /></CommandGrip>
            <CommandText>
              <pre>{"Polecenie:\nPolecenie:\nPolecenie:\nPolecenie:\nPolecenie: CUI"}</pre>
              <CommandLine>Polecenie:<input aria-label="Polecenie" /></CommandLine>
            </CommandText>
          </Command>
        </Centre>
        <Props>
          <PropsTitle>Właściwości<Icon n="x" s={5} /></PropsTitle>
          <PropsTools><Icon n="caret" s={5} f /><Tool n="copy" c="#b9c6d2" /><Tool n="block" c="#5db8f5" /><Tool n="brush" c="#e8d35a" /></PropsTools>
          <PropsHead><Icon n="caret" s={5} f /></PropsHead>
          <PropsGroup $h={70}>
            <PropsRow><Swatch />JakWarstwa</PropsRow>
            <PropsRow>_POSADZKA2</PropsRow>
            <PropsRow><Stroke $w={17} />JakWarstwa</PropsRow>
            <PropsRow>10.0000</PropsRow>
            <PropsRow><Stroke $w={15} $t={2} />JakWarstwa</PropsRow>
            <PropsRow>JakWarstwa</PropsRow>
            <PropsRow>0.0000</PropsRow>
          </PropsGroup>
          <PropsHead><Icon n="caret" s={5} f /></PropsHead>
          <PropsGroup $h={51} $dim>
            {["9584.7806", "6982.2353", "0.0000", "19317.9536", "12543.6036"].map((v) => <PropsRow key={v}>{v}</PropsRow>)}
          </PropsGroup>
          <PropsHead><Icon n="caret" s={5} f /></PropsHead>
          <PropsGroup $h={60}>
            {["1:1", "Tak", "Tak", "Tak", "", "2D druty"].map((v, i) => <PropsRow key={i}>{v}</PropsRow>)}
          </PropsGroup>
        </Props>
      </Middle>
      <Status>
        <Coords>1 : 50▾ -2789.0446, 11447.1685, 0.0000</Coords>
        {["grid", "grid", "ortho", "circle", "rect", "line", "ucs", "ortho", "menu", "text", "square", "brush", "insert"].map((n, i) => (
          <Tool key={i} n={n} s={6} label={`Tryb ${i + 1}`} c="#e3ebf2" bg={[0, 1, 4, 5, 7, 8, 9, 12].includes(i) ? "#3f6f96" : undefined} />
        ))}
        <StatusGap />
        <Toggle>linia bazowa</Toggle><Toggle $on>kreskowanie</Toggle><Toggle>pogrubianie</Toggle><Toggle $on>sk</Toggle>
        <Grow />
        <Tool n="stretch" c="#e3ebf2" s={6} /><Tool n="move" c="#9fd0f5" s={6} /><Tool n="block" c="#c3ccd5" s={6} /><Tool n="gear" c="#4fb2f5" s={7} /><Tool n="rect" c="#8fa3b5" s={6} /><Tool n="full" c="#c3ccd5" s={7} /><Tool n="menu" c="#4fa5f0" s={6} />
      </Status>
      <CustomizeDialog />
      <Note>W WERSJI 2024<br />P.2 NIE DZIAŁA PRAWY PRZYCISK MYSZY -BRAK NOWEGO POLECENIA<br />W 2025 OK</Note>
      <Arrow viewBox="0 0 70 114" aria-hidden="true">
        <path d="M62 2 10 104" stroke="#e01b22" strokeWidth="2" />
        <path d="M7 111 6 100 16 105z" fill="#e01b22" />
      </Arrow>
    </Page>
  );
}
